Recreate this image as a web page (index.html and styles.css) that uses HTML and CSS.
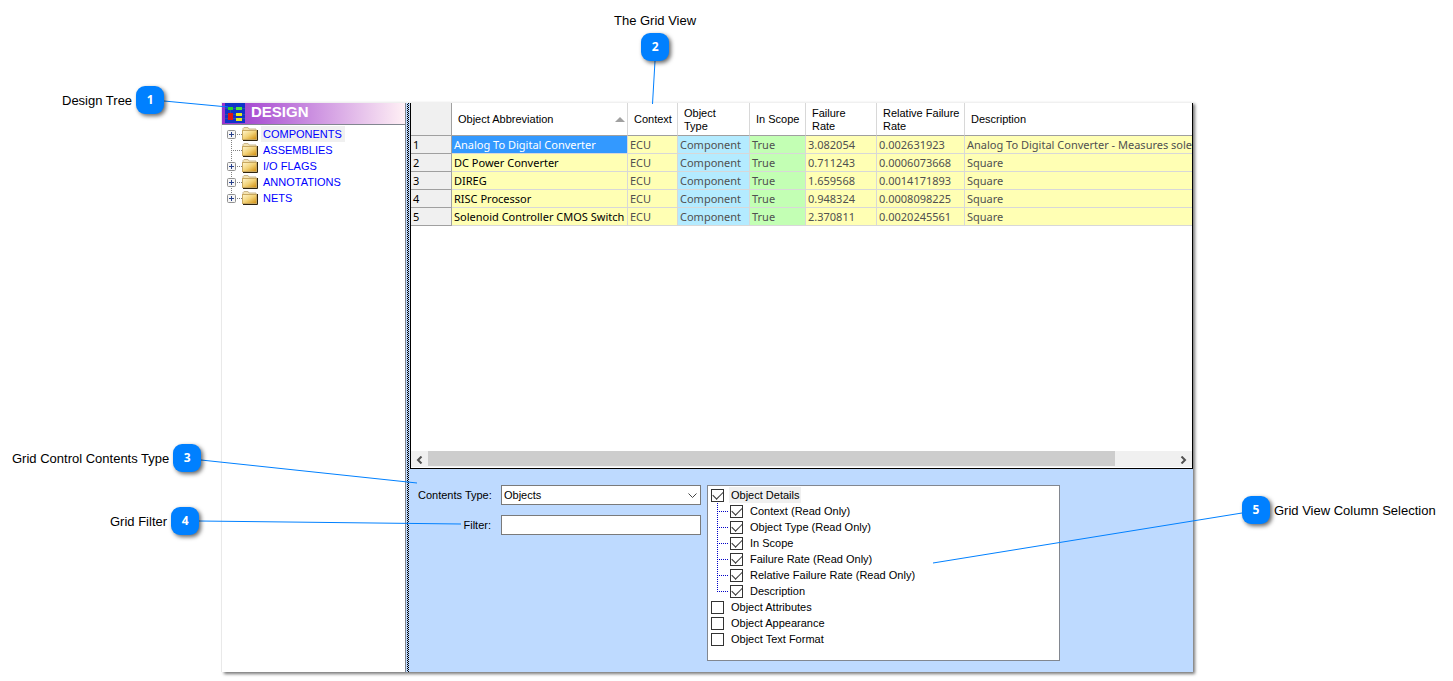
FILE: index.html
```html
<!DOCTYPE html>
<html lang="en">
<head>
    <meta charset="UTF-8">
    <meta name="viewport" content="width=device-width, initial-scale=1.0">
    <title>Grid View</title>
    <link rel="stylesheet" href="styles.css">
</head>
<body>
    <!-- Shared icons -->
    <svg class="symbols" aria-hidden="true">
        <symbol id="folder" viewBox="0 0 16 14">
            <path d="M1 3V1.5L2 .5h4l1 1.5h7v2" fill="#f3e2b0" stroke="#c9b68c"/>
            <rect x="0.5" y="3.5" width="14" height="9" fill="url(#gold)" stroke="#c8a860"/>
            <path d="M1 13.5h14.5V3" fill="none" stroke="#2e2410"/>
        </symbol>
        <symbol id="plus" viewBox="0 0 9 9">
            <rect x="0.5" y="0.5" width="8" height="8" rx="1" fill="#f6f6f6" stroke="#919191"/>
            <path d="M2 4.5h5M4.5 2v5" stroke="#27408b"/>
        </symbol>
        <linearGradient id="gold" x1="0" y1="0" x2="1" y2="1">
            <stop offset="0" stop-color="#fff6cf"/>
            <stop offset="0.5" stop-color="#f2d277"/>
            <stop offset="1" stop-color="#d08c0c"/>
        </linearGradient>
    </svg>

    <main class="window">
        <section class="design">
            <header class="design-title">
                <svg width="20" height="20" viewBox="0 0 20 20" aria-hidden="true">
                    <rect width="20" height="20" fill="#1033c8"/>
                    <path d="M0 5.5h20M0 15.5h20M5.5 5v6M0 11.5h20" stroke="#2c52a8"/>
                    <rect x="3" y="4" width="5" height="3" fill="#25d12c"/>
                    <rect x="11" y="4" width="6" height="3" fill="#4ee83a"/>
                    <rect x="3" y="10" width="5" height="7" fill="#e01414"/>
                    <rect x="11" y="10" width="6" height="3" fill="#e6ec1c"/>
                    <rect x="11" y="15" width="6" height="3" fill="#e6ec1c"/>
                </svg>
                <h1>DESIGN</h1>
            </header>
            <ul class="tree">
                <li><button class="expander" aria-label="Expand components"><svg><use href="#plus"/></svg></button><svg class="folder"><use href="#folder"/></svg><a href="#" class="current">COMPONENTS</a></li>
                <li><span class="expander"></span><svg class="folder"><use href="#folder"/></svg><a href="#">ASSEMBLIES</a></li>
                <li><button class="expander" aria-label="Expand I/O flags"><svg><use href="#plus"/></svg></button><svg class="folder"><use href="#folder"/></svg><a href="#">I/O FLAGS</a></li>
                <li><button class="expander" aria-label="Expand annotations"><svg><use href="#plus"/></svg></button><svg class="folder"><use href="#folder"/></svg><a href="#">ANNOTATIONS</a></li>
                <li><button class="expander" aria-label="Expand nets"><svg><use href="#plus"/></svg></button><svg class="folder"><use href="#folder"/></svg><a href="#">NETS</a></li>
            </ul>
        </section>

        <div class="splitter"></div>

        <section class="content">
            <div class="grid-view">
                <div class="grid-scroll">
                    <table>
                        <colgroup>
                            <col class="col-num"><col class="col-name"><col class="col-context"><col class="col-type">
                            <col class="col-scope"><col class="col-rate"><col class="col-relative"><col>
                        </colgroup>
                        <thead>
                            <tr>
                                <th></th>
                                <th><div class="sorted">Object Abbreviation <svg width="10" height="5" viewBox="0 0 10 5" aria-hidden="true"><path d="M0 5L5 0L10 5Z" fill="#a0a0a0"/></svg></div></th>
                                <th>Context</th>
                                <th>Object<br>Type</th>
                                <th>In Scope</th>
                                <th>Failure<br>Rate</th>
                                <th>Relative Failure<br>Rate</th>
                                <th>Description</th>
                            </tr>
                        </thead>
                        <tbody>
                            <tr><th>1</th><td class="name selected">Analog To Digital Converter</td><td>ECU</td><td class="type">Component</td><td class="scope">True</td><td>3.082054</td><td>0.002631923</td><td>Analog To Digital Converter - Measures solen</td></tr>
                            <tr><th>2</th><td class="name">DC Power Converter</td><td>ECU</td><td class="type">Component</td><td class="scope">True</td><td>0.711243</td><td>0.0006073668</td><td>Square</td></tr>
                            <tr><th>3</th><td class="name">DIREG</td><td>ECU</td><td class="type">Component</td><td class="scope">True</td><td>1.659568</td><td>0.0014171893</td><td>Square</td></tr>
                            <tr><th>4</th><td class="name">RISC Processor</td><td>ECU</td><td class="type">Component</td><td class="scope">True</td><td>0.948324</td><td>0.0008098225</td><td>Square</td></tr>
                            <tr><th>5</th><td class="name">Solenoid Controller CMOS Switch</td><td>ECU</td><td class="type">Component</td><td class="scope">True</td><td>2.370811</td><td>0.0020245561</td><td>Square</td></tr>
                        </tbody>
                    </table>
                </div>
                <div class="scrollbar">
                    <button aria-label="Scroll left"><svg width="7" height="8" viewBox="0 0 7 8"><path d="M5.5 0.5L2 4L5.5 7.5" fill="none" stroke="#505050" stroke-width="2"/></svg></button>
                    <div class="track"><div class="thumb"></div></div>
                    <button aria-label="Scroll right"><svg width="7" height="8" viewBox="0 0 7 8"><path d="M1.5 0.5L5 4L1.5 7.5" fill="none" stroke="#505050" stroke-width="2"/></svg></button>
                </div>
            </div>

            <form class="options">
                <div class="fields">
                    <label for="contents-type">Contents Type:</label>
                    <div class="select">
                        <select id="contents-type"><option>Objects</option></select>
                        <svg width="9" height="5" viewBox="0 0 9 5" aria-hidden="true"><path d="M0.5 0.5L4.5 4.5L8.5 0.5" fill="none" stroke="#444"/></svg>
                    </div>
                    <label for="filter">Filter:</label>
                    <input type="text" id="filter">
                </div>
                <ul class="checks">
                    <li>
                        <label><input type="checkbox" checked><span class="current">Object Details</span></label>
                        <ul>
                            <li><label><input type="checkbox" checked><span>Context (Read Only)</span></label></li>
                            <li><label><input type="checkbox" checked><span>Object Type (Read Only)</span></label></li>
                            <li><label><input type="checkbox" checked><span>In Scope</span></label></li>
                            <li><label><input type="checkbox" checked><span>Failure Rate (Read Only)</span></label></li>
                            <li><label><input type="checkbox" checked><span>Relative Failure Rate (Read Only)</span></label></li>
                            <li><label><input type="checkbox" checked><span>Description</span></label></li>
                        </ul>
                    </li>
                    <li><label><input type="checkbox"><span>Object Attributes</span></label></li>
                    <li><label><input type="checkbox"><span>Object Appearance</span></label></li>
                    <li><label><input type="checkbox"><span>Object Text Format</span></label></li>
                </ul>
            </form>
        </section>
    </main>

    <!-- Callouts over the window -->
    <svg class="leaders" width="1453" height="681" aria-hidden="true">
        <path d="M164 101L228 107M655 61L652.5 104M201 460L417 483M199 521L461 524M1242 513L933 563"/>
    </svg>
    <div class="callout callout-tree"><span>Design Tree</span><b>1</b></div>
    <div class="callout callout-grid"><span>The Grid View</span><b>2</b></div>
    <div class="callout callout-type"><span>Grid Control Contents Type</span><b>3</b></div>
    <div class="callout callout-filter"><span>Grid Filter</span><b>4</b></div>
    <div class="callout callout-columns"><b>5</b><span>Grid View Column Selection</span></div>
</body>
</html>
```
FILE: styles.css
```css
* {
    box-sizing: border-box;
}
body {
    margin: 0;
    padding: 102px 260px 8px 222px;
    background: #fff;
    color: #000;
    font-family: "Liberation Sans", Arial, sans-serif;
    font-size: 11px;
}
ul {
    list-style: none;
    margin: 0;
    padding: 0;
}
button {
    border: 0;
    padding: 0;
    background: none;
}
svg {
    flex: none;
}
.symbols {
    position: absolute;
    width: 0;
    height: 0;
}
.window {
    display: flex;
    min-height: 570px;
    border-top: 1px solid #f0f0f0;
    box-shadow: 2px 2px 3px #777, -1px 0 0 #f0f0f0;
}

/* Design tree */
.design {
    flex: 0 0 184px;
    border-right: 1px solid #828790;
}
.design-title {
    display: flex;
    align-items: flex-start;
    gap: 6px;
    height: 22px;
    padding: 0 3px;
    border-bottom: 1px solid #828790;
    background: linear-gradient(90deg, #9932cc, #fff0f5);
}
.design-title h1 {
    margin: 0;
    color: #fff;
    font-size: 15px;
    line-height: 18px;
}
.tree {
    padding: 1px 0 0 5px;
}
.tree li {
    display: flex;
    align-items: center;
    height: 16px;
    background: repeating-linear-gradient(#808080 0 1px, transparent 1px 2px) 4px 0 / 1px 16px no-repeat;
}
.tree li:first-child {
    background-position: 4px 8px;
}
.tree li:last-child {
    background-size: 1px 8px;
}
.expander {
    display: flex;
    align-items: center;
    width: 15px;
    height: 16px;
    background: repeating-linear-gradient(90deg, #808080 0 1px, transparent 1px 2px) 4px 8px / 11px 1px no-repeat;
}
.expander svg {
    width: 9px;
    height: 9px;
}
.folder {
    width: 16px;
    height: 14px;
}
.tree a {
    margin-left: 3px;
    padding: 0 3px 0 2px;
    color: #00f;
    line-height: 16px;
    text-decoration: none;
}
.current {
    background: #f0f0f0;
}

.splitter {
    flex: 0 0 4px;
    border-left: 1px solid #bedaff;
    border-right: 1px solid #bedaff;
    background: repeating-conic-gradient(#000 0 25%, #bedaff 0 50%) 0 0 / 2px 2px;
}

/* Grid */
.content {
    flex: 1;
    min-width: 0;
    display: flex;
    flex-direction: column;
}
.grid-view {
    display: flex;
    flex-direction: column;
    height: 366px;
    border: solid #000;
    border-width: 0 1px 1px 1px;
}
.grid-scroll {
    flex: 1;
    overflow: hidden;
}
table {
    width: 100%;
    table-layout: fixed;
    border-collapse: separate;
    border-spacing: 0;
    font-family: "Noto Sans", sans-serif;
}
.col-num {
    width: 41px;
}
.col-name {
    width: 176px;
}
.col-context {
    width: 50px;
}
.col-type {
    width: 72px;
}
.col-scope {
    width: 56px;
}
.col-rate {
    width: 71px;
}
.col-relative {
    width: 88px;
}
th, td {
    height: 18px;
    padding: 0 2px;
    border: solid #d8d8d8;
    border-width: 0 1px 1px 0;
    background: #ffffb4;
    color: #505050;
    font-weight: normal;
    line-height: 16px;
    text-align: left;
    white-space: nowrap;
    overflow: hidden;
}
thead th {
    height: 33px;
    padding: 1px 0 0 6px;
    border-bottom-color: #a0a0a0;
    background: #fff;
    color: #000;
    font-family: "Liberation Sans", Arial, sans-serif;
    line-height: 13px;
}
tr th:first-child {
    border-color: #a0a0a0;
    background: #f0f0f0;
    color: #000;
}
tr > :last-child {
    padding-right: 0;
    border-right: 0;
}
.sorted {
    display: flex;
    align-items: center;
    justify-content: space-between;
    padding-right: 2px;
}
.name {
    color: #000;
}
.selected {
    background: #3399ff;
    color: #fff;
}
.type {
    background: #b4ebff;
}
.scope {
    background: #c3ffb4;
}
.scrollbar {
    display: flex;
    height: 16px;
    margin-bottom: 1px;
    background: #f0f0f0;
}
.scrollbar button {
    flex: 0 0 17px;
}
.track {
    flex: 1;
}
.thumb {
    width: 92%;
    height: 15px;
    background: #cdcdcd;
}

/* Options below the grid */
.options {
    flex: 1;
    display: flex;
    align-items: flex-start;
    gap: 6px;
    padding: 16px 8px 11px;
    background: #bedaff;
}
.fields {
    display: grid;
    grid-template-columns: 73px 200px;
    gap: 10px;
    align-items: center;
}
.fields > label {
    text-align: right;
    white-space: nowrap;
}
.select {
    display: grid;
    align-items: center;
}
.select > * {
    grid-area: 1 / 1;
}
.select svg {
    justify-self: end;
    margin-right: 4px;
    pointer-events: none;
}
select, input[type="text"] {
    width: 100%;
    height: 20px;
    margin: 0;
    padding: 0 2px;
    border: 1px solid #7a7a7a;
    border-radius: 0;
    background: #fff;
    color: #000;
    font: inherit;
    appearance: none;
}
.checks {
    flex: 0 1 353px;
    min-height: 176px;
    padding: 1px 3px;
    border: 1px solid #828790;
    background: #fff;
}
.checks ul {
    margin-left: 6px;
    padding: 0;
    background: repeating-linear-gradient(#0000c8 0 1px, transparent 1px 2px) 0 0 / 1px 88px no-repeat;
}
.checks ul li {
    padding-left: 13px;
    background: repeating-linear-gradient(90deg, #0000c8 0 1px, transparent 1px 2px) 0 8px / 11px 1px no-repeat;
}
.checks label {
    display: flex;
    align-items: center;
    gap: 5px;
    height: 16px;
    line-height: 16px;
}
.checks span {
    padding: 0 2px;
}
.checks input {
    display: grid;
    place-items: center;
    width: 13px;
    height: 13px;
    margin: 0;
    border: 1px solid #333;
    background: #fff;
    appearance: none;
}
.checks input:checked::after {
    content: "";
    width: 9px;
    height: 5px;
    margin-bottom: 3px;
    border: solid #333;
    border-width: 0 0 1px 1px;
    transform: rotate(-45deg);
}

/* Callouts */
.leaders {
    position: absolute;
    top: 0;
    left: 0;
    fill: none;
    stroke: #0080ff;
    pointer-events: none;
}
.callout {
    position: absolute;
    display: flex;
    align-items: center;
    gap: 4px;
    font-size: 13px;
    line-height: 16px;
    white-space: nowrap;
}
.callout span {
    padding-top: 1px;
}
.callout b {
    width: 28px;
    height: 28px;
    border-radius: 9px;
    background: #0080ff;
    box-shadow: 2px 2px 4px rgba(0, 0, 0, 0.6);
    color: #fff;
    font-family: "Open Sans", sans-serif;
    font-size: 12px;
    line-height: 28px;
    text-align: center;
}
.callout-tree {
    top: 86px;
    left: 62px;
}
.callout-grid {
    top: 12px;
    left: 614px;
    flex-direction: column;
}
.callout-type {
    top: 444px;
    left: 12px;
}
.callout-filter {
    top: 507px;
    left: 110px;
}
.callout-columns {
    top: 496px;
    left: 1242px;
}
```
